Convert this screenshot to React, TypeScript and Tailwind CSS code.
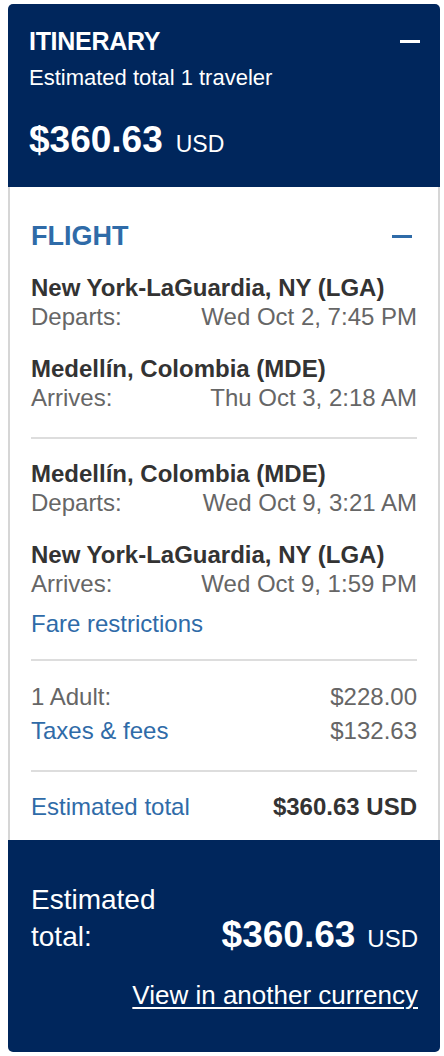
import React from "react";

function Row({ label, value }: { label: string; value: string }) {
  return (
    <div className="flex justify-between text-[24px] leading-[29px] text-[#666666]">
      <span>{label}</span>
      <span>{value}</span>
    </div>
  );
}

function Leg({ place, label, value, className = "" }: { place: string; label: string; value: string; className?: string }) {
  return (
    <div className={className}>
      <div className="text-[24px] leading-[28px] font-bold text-[#333333]">{place}</div>
      <Row label={label} value={value} />
    </div>
  );
}

export default function App() {
  return (
    <div className="w-[444px] h-[1056px] bg-white pt-1 pl-2 pr-1 font-['Liberation_Sans',Arial,Helvetica,sans-serif]">
      <div className="rounded-[5px] overflow-hidden">
        <div className="bg-[#00265c] text-white pl-[21px] pr-[20px] pt-[22px] pb-[27px]">
          <div className="flex justify-between items-center">
            <div className="text-[25px] leading-[30px] font-bold tracking-[-0.3px]">ITINERARY</div>
            <div className="w-5 h-[3px] bg-white" />
          </div>
          <div className="mt-[10px] text-[22px] leading-[24px]">Estimated total 1 traveler</div>
          <div className="mt-[30px] text-[37px] leading-[40px] h-[40px] font-bold whitespace-nowrap">
            $360.63<span className="text-[23px] leading-none font-normal ml-[13px]">USD</span>
          </div>
        </div>
        <div className="border-x-2 border-[#d6d6d6] bg-white px-[21px] pt-[33px] pb-[19px]">
          <div className="flex justify-between items-center">
            <div className="text-[27px] leading-[32px] font-bold text-[#2f6ba8]">FLIGHT</div>
            <div className="w-5 h-[3px] bg-[#2f6ba8] mr-[5px]" />
          </div>
          <Leg className="mt-[22px]" place="New York-LaGuardia, NY (LGA)" label="Departs:" value="Wed Oct 2, 7:45 PM" />
          <Leg className="mt-[24px]" place="Medellín, Colombia (MDE)" label="Arrives:" value="Thu Oct 3, 2:18 AM" />
          <div className="mt-[25px] h-[2px] bg-[#dddddd]" />
          <Leg className="mt-[21px]" place="Medellín, Colombia (MDE)" label="Departs:" value="Wed Oct 9, 3:21 AM" />
          <Leg className="mt-[24px]" place="New York-LaGuardia, NY (LGA)" label="Arrives:" value="Wed Oct 9, 1:59 PM" />
          <div className="mt-[11px] text-[24px] leading-[29px] text-[#2f6ba8]">Fare restrictions</div>
          <div className="mt-[21px] h-[2px] bg-[#dddddd]" />
          <div className="mt-[21px]">
            <Row label="1 Adult:" value="$228.00" />
            <div className="mt-[5px] flex justify-between text-[24px] leading-[29px]">
              <span className="text-[#2f6ba8]">Taxes &amp; fees</span>
              <span className="text-[#666666]">$132.63</span>
            </div>
          </div>
          <div className="mt-[25px] h-[2px] bg-[#dddddd]" />
          <div className="mt-[20px] flex justify-between text-[24px] leading-[29px]">
            <span className="text-[#2f6ba8]">Estimated total</span>
            <span className="font-bold text-[#333333]">$360.63 USD</span>
          </div>
        </div>
        <div className="bg-[#00265c] text-white pl-[23px] pr-[22px] pt-[41px] h-[212px]">
          <div className="flex justify-between items-end">
            <div className="text-[28px] leading-[37px]">
              Estimated
              <br />
              total:
            </div>
            <div className="text-[37px] leading-[37px] h-[37px] mb-[2px] font-bold whitespace-nowrap">
              $360.63<span className="text-[24px] leading-none font-normal ml-[12px]">USD</span>
            </div>
          </div>
          <div className="mt-[25px] text-right text-[26px] leading-[30px] underline underline-offset-[3px] decoration-[2px]">
            View in another currency
          </div>
        </div>
      </div>
    </div>
  );
}
